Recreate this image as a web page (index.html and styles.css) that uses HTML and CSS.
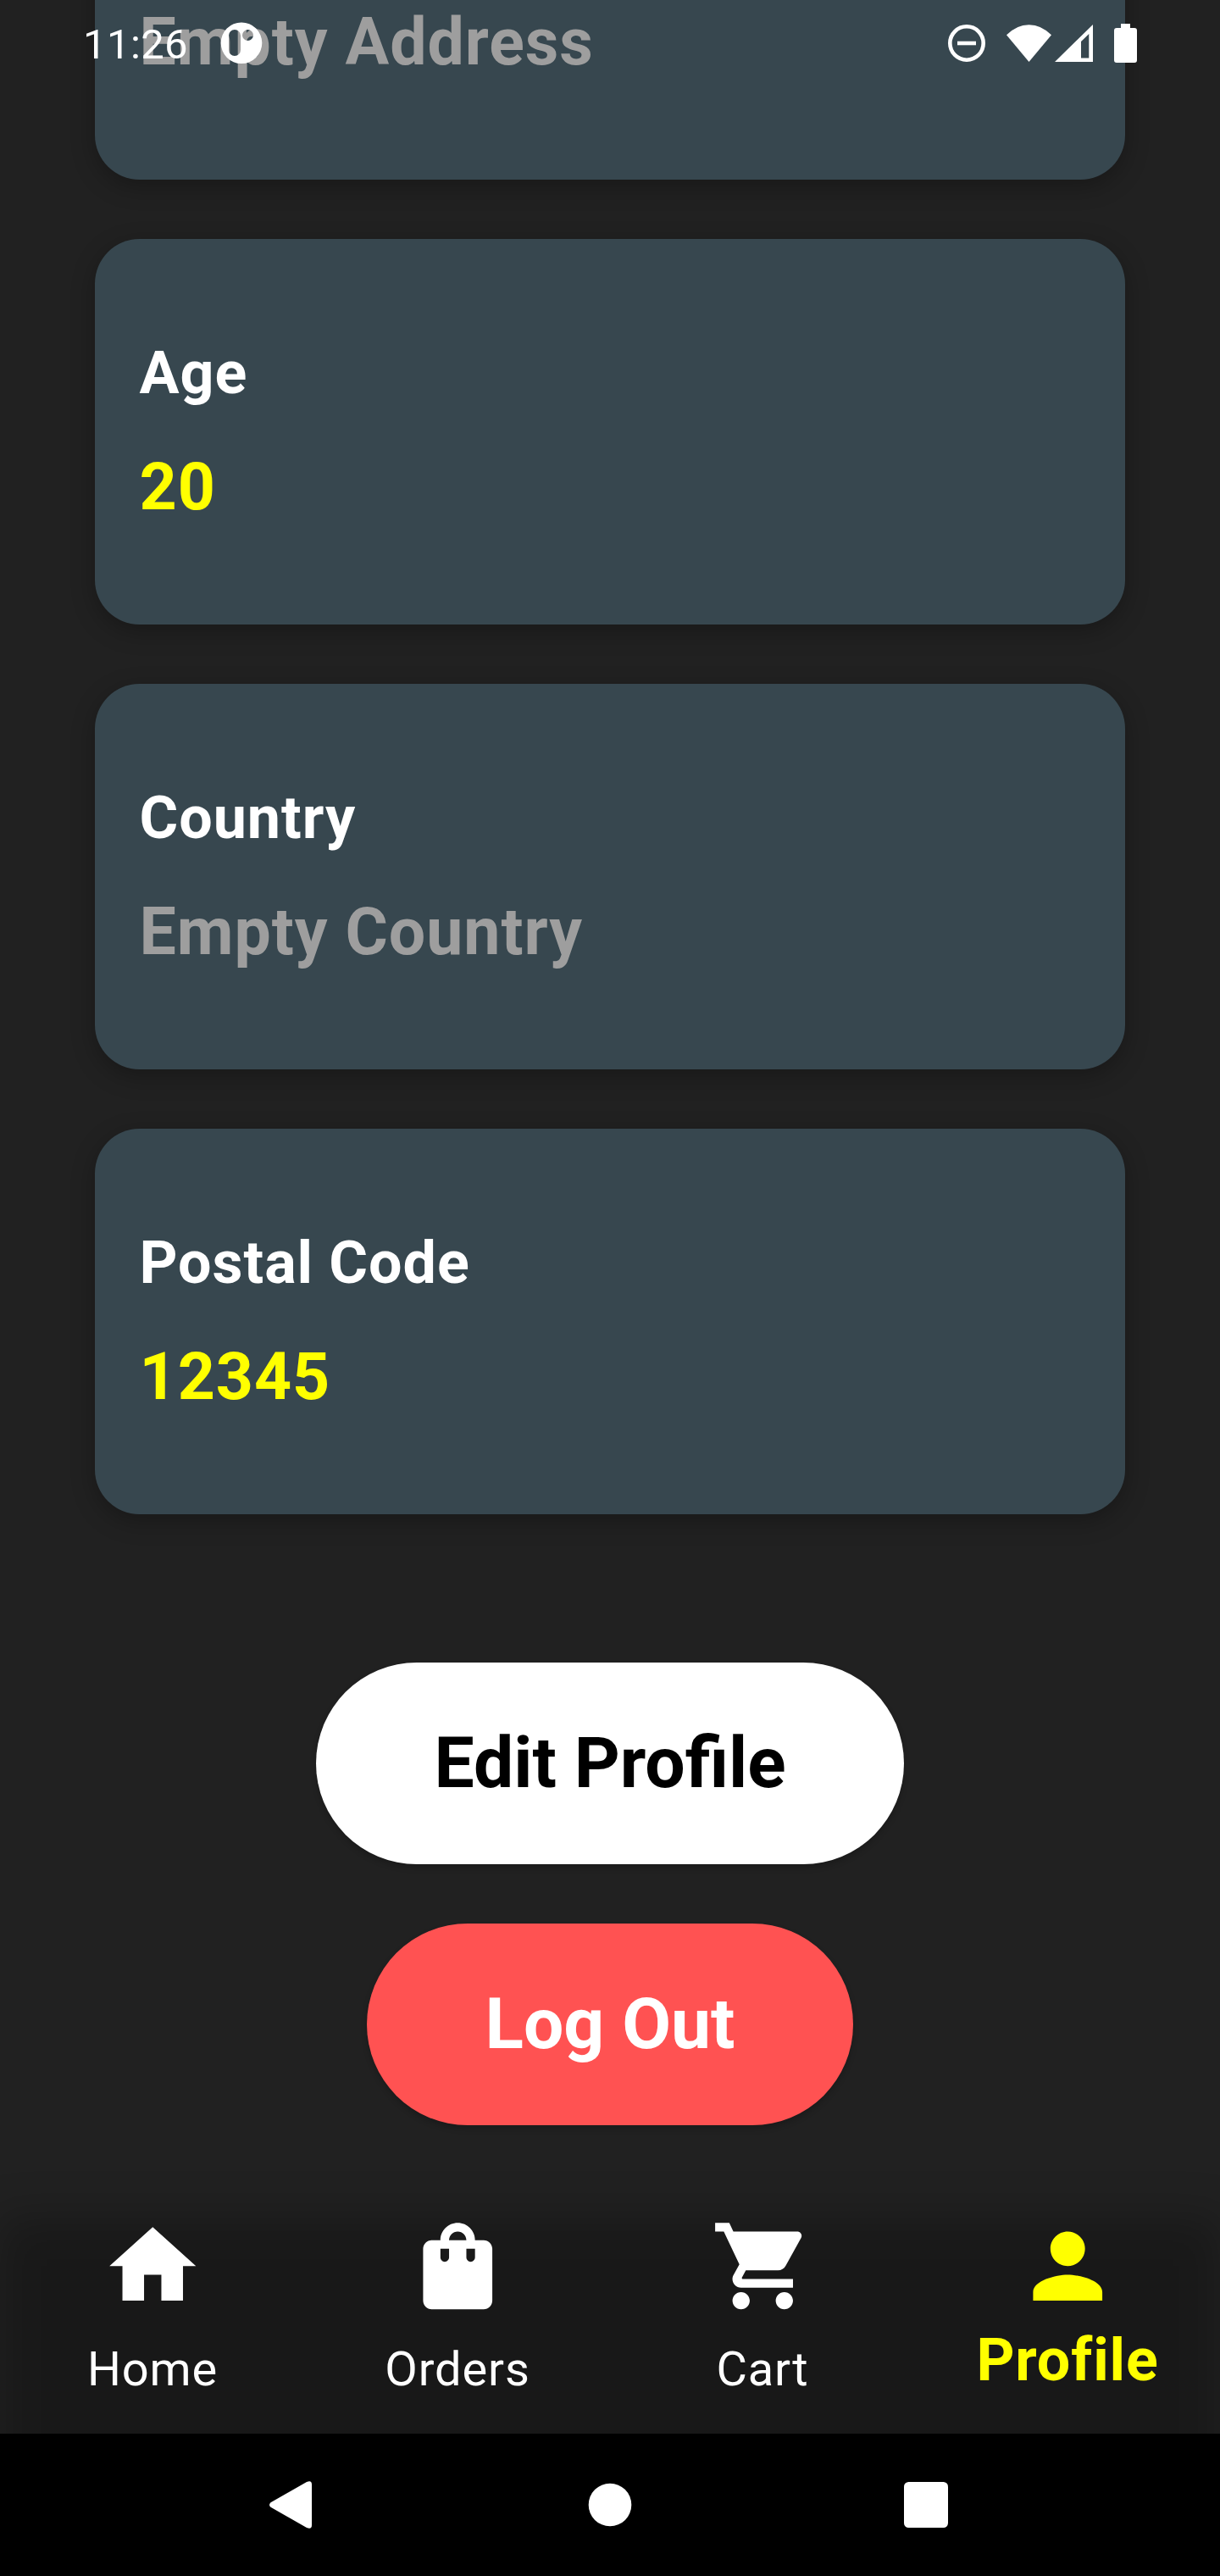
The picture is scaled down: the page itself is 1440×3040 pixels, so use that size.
FILE: index.html
```html
<!DOCTYPE html>
<html lang="en">
<head>
<meta charset="utf-8">
<title>Profile</title>
<link rel="stylesheet" href="styles.css">
</head>
<body>
<div class="phone">
  <header class="status-bar">
    <div class="status-left">
      <span class="clock">11:26</span>
      <svg class="app-icon" width="50" height="50" viewBox="0 0 50 50" fill="#fff" fill-rule="evenodd"><path d="M25 .5a24.300 24.300 0 1 1 0 48.600a24.300 24.300 0 1 1 0-48.600zM17 9a7 7 0 0 0-7 7V33a7 7 0 0 0 14 0V16a7 7 0 0 0-7-7zM32.500 9a6.500 6.500 0 1 0 0 13a6.500 6.500 0 1 0 0-13z"/></svg>
    </div>
    <div class="status-right">
      <svg class="dnd" width="44" height="44" viewBox="0 0 44 44"><circle cx="22" cy="22" r="19.700" fill="none" stroke="#fff" stroke-width="4.600"/><path d="M11 19.700h22v4.600H11z" fill="#fff"/></svg>
      <svg class="wifi" width="53" height="44" viewBox="0 0 53 44" fill="#fff"><path d="M0 12.300Q12 .2 26.500.2T53 12.300L26.500 44z"/></svg>
      <svg class="signal" width="45" height="44" viewBox="0 0 45 44" fill="#fff" fill-rule="evenodd"><path d="M45 0v44H0zM40.300 11l-9.300 9v19.500h9.300z"/></svg>
      <svg class="battery" width="27" height="46" viewBox="0 0 27 46" fill="#fff"><path d="M8 0h11v5h5q3 0 3 3v35q0 3-3 3H3q-3 0-3-3V8q0-3 3-3h5z"/></svg>
    </div>
  </header>

  <main class="content">
    <section class="card"><h2 class="label">Address</h2><p class="value empty">Empty Address</p></section>
    <section class="card"><h2 class="label">Age</h2><p class="value">20</p></section>
    <section class="card"><h2 class="label">Country</h2><p class="value empty">Empty Country</p></section>
    <section class="card"><h2 class="label">Postal Code</h2><p class="value">12345</p></section>
    <div class="actions">
      <button class="btn">Edit Profile</button>
      <button class="btn danger">Log Out</button>
    </div>
  </main>

  <nav class="tabs">
    <a class="tab"><svg class="tab-icon" viewBox="0 0 24 24"><path d="M10 20v-6h4v6h5v-8h3L12 3 2 12h3v8z"/></svg><span>Home</span></a>
    <a class="tab"><svg class="tab-icon" viewBox="0 0 24 24"><path d="M18 6h-2c0-2.210-1.790-4-4-4S8 3.790 8 6H6c-1.100 0-2 .9-2 2v12c0 1.100.9 2 2 2h12c1.100 0 2-.9 2-2V8c0-1.100-.9-2-2-2zm-8 4c0 .55-.45 1-1 1s-1-.45-1-1V8h2v2zm2-6c1.100 0 2 .9 2 2h-4c0-1.100.9-2 2-2zm4 6c0 .55-.45 1-1 1s-1-.45-1-1V8h2v2z"/></svg><span>Orders</span></a>
    <a class="tab"><svg class="tab-icon" viewBox="0 0 24 24"><path d="M7 18c-1.100 0-1.990.9-1.990 2S5.900 22 7 22s2-.9 2-2-.9-2-2-2zM1 2v2h2l3.600 7.590-1.350 2.450c-.16.280-.25.610-.25.960 0 1.100.9 2 2 2h12v-2H7.420c-.14 0-.25-.11-.25-.25l.03-.12.9-1.630h7.450c.75 0 1.410-.41 1.750-1.030l3.580-6.490c.08-.14.120-.31.120-.48 0-.55-.45-1-1-1H5.210l-.94-2H1zm16 16c-1.100 0-1.990.9-1.990 2s.89 2 1.990 2 2-.9 2-2-.9-2-2-2z"/></svg><span>Cart</span></a>
    <a class="tab active"><svg class="tab-icon" viewBox="0 0 24 24"><path d="M12 12c2.210 0 4-1.790 4-4s-1.790-4-4-4-4 1.790-4 4 1.790 4 4 4zm0 2c-2.670 0-8 1.340-8 4v2h16v-2c0-2.660-5.330-4-8-4z"/></svg><span>Profile</span></a>
  </nav>

  <footer class="system-nav">
    <svg width="50" height="56" viewBox="0 0 50 56" fill="#fff"><path d="M1.500 25.200L44 1Q50-1.500 50 4V52Q50 57.500 44 55L1.500 30.800Q-1.500 28 1.500 25.200z"/></svg>
    <svg class="sys-home" width="52" height="52" viewBox="0 0 52 52" fill="#fff"><circle cx="26" cy="26" r="25.300"/></svg>
    <svg width="52" height="54" viewBox="0 0 52 54" fill="#fff"><rect width="52" height="54" rx="5.500"/></svg>
  </footer>
</div>
</body>
</html>
```
FILE: styles.css
```css
* { box-sizing: border-box; }

body {
  margin: 0;
  background: #212121;
  font-family: Roboto, "Noto Sans", sans-serif;
  color: #fff;
}

.phone {
  position: relative;
  display: flex;
  flex-direction: column;
  width: 1440px;
  height: 3040px;
  overflow: hidden;
  background: #212121;
}

/* System status bar floats over the scrolled content */
.status-bar {
  position: absolute;
  z-index: 2;
  top: 0;
  left: 0;
  display: flex;
  justify-content: space-between;
  width: 100%;
  height: 102px;
  padding: 0 98px;
}

.status-left,
.status-right { display: flex; align-items: center; }

.clock {
  padding-top: 4px;
  font-size: 49px;
  line-height: 102px;
  letter-spacing: 0.4px;
}
.app-icon { margin-left: 38px; }
.wifi { margin-left: 25px; }
.signal { margin-left: 4px; }
.battery { margin-left: 25px; }

/* The list is scrolled, so the first card starts above the screen */
.content {
  display: flex;
  flex: 1 1 0;
  flex-direction: column;
  gap: 70px;
  min-height: 0;
  margin-top: -243px;
  padding: 0 112px;
}

.card {
  flex: none;
  height: 455px;
  padding: 108px 52.5px 0;
  border-radius: 52.5px;
  background: #37474f;
  box-shadow: 0 8px 28px rgba(0, 0, 0, 0.27);
}

.label {
  margin: 0 0 30px;
  font-size: 70px;
  font-weight: 700;
  line-height: 100px;
  letter-spacing: 0.95px;
}

.value {
  margin: 0;
  color: #ff0;
  font-size: 77px;
  font-weight: 700;
  line-height: 110px;
  letter-spacing: 0.95px;
}

.value.empty { color: #9e9e9e; }

.actions {
  display: flex;
  flex: none;
  flex-direction: column;
  align-items: center;
  gap: 70px;
  padding-top: 105px;
}

.btn {
  height: 238px;
  padding: 0 139.5px;
  border: 0;
  border-radius: 119px;
  background: #fff;
  color: #000;
  font: 700 84px/98px Roboto, "Noto Sans", sans-serif;
  box-shadow: 0 4px 7px rgba(0, 0, 0, 0.2);
}

.btn.danger { background: #ff5252; color: #fff; }

.tabs {
  position: relative;
  display: grid;
  flex: none;
  grid-template-columns: repeat(4, 1fr);
  height: 322px;
}

/* Soft dark backdrop of the tab bar */
.tabs::before {
  content: "";
  position: absolute;
  inset: 68px 0 -100px;
  background: rgba(0, 0, 0, 0.25);
  filter: blur(26px);
}

.tab {
  position: relative;
  display: flex;
  flex-direction: column;
  align-items: center;
  padding-top: 62.5px;
  font-size: 56px;
  line-height: 66px;
  letter-spacing: 0.875px;
}

.tab-icon { width: 122.5px; height: 122.5px; fill: currentColor; }
.tab span { margin-top: 28px; }

.tab.active {
  color: #ff0;
  font-size: 70px;
  font-weight: 700;
  line-height: 82px;
}
.tab.active span { margin-top: 9px; }

.system-nav {
  position: relative;
  display: flex;
  flex: none;
  align-items: center;
  justify-content: space-between;
  height: 168px;
  padding: 0 321px 0 318px;
  background: #000;
}

.sys-home { margin-left: 5px; }
```
